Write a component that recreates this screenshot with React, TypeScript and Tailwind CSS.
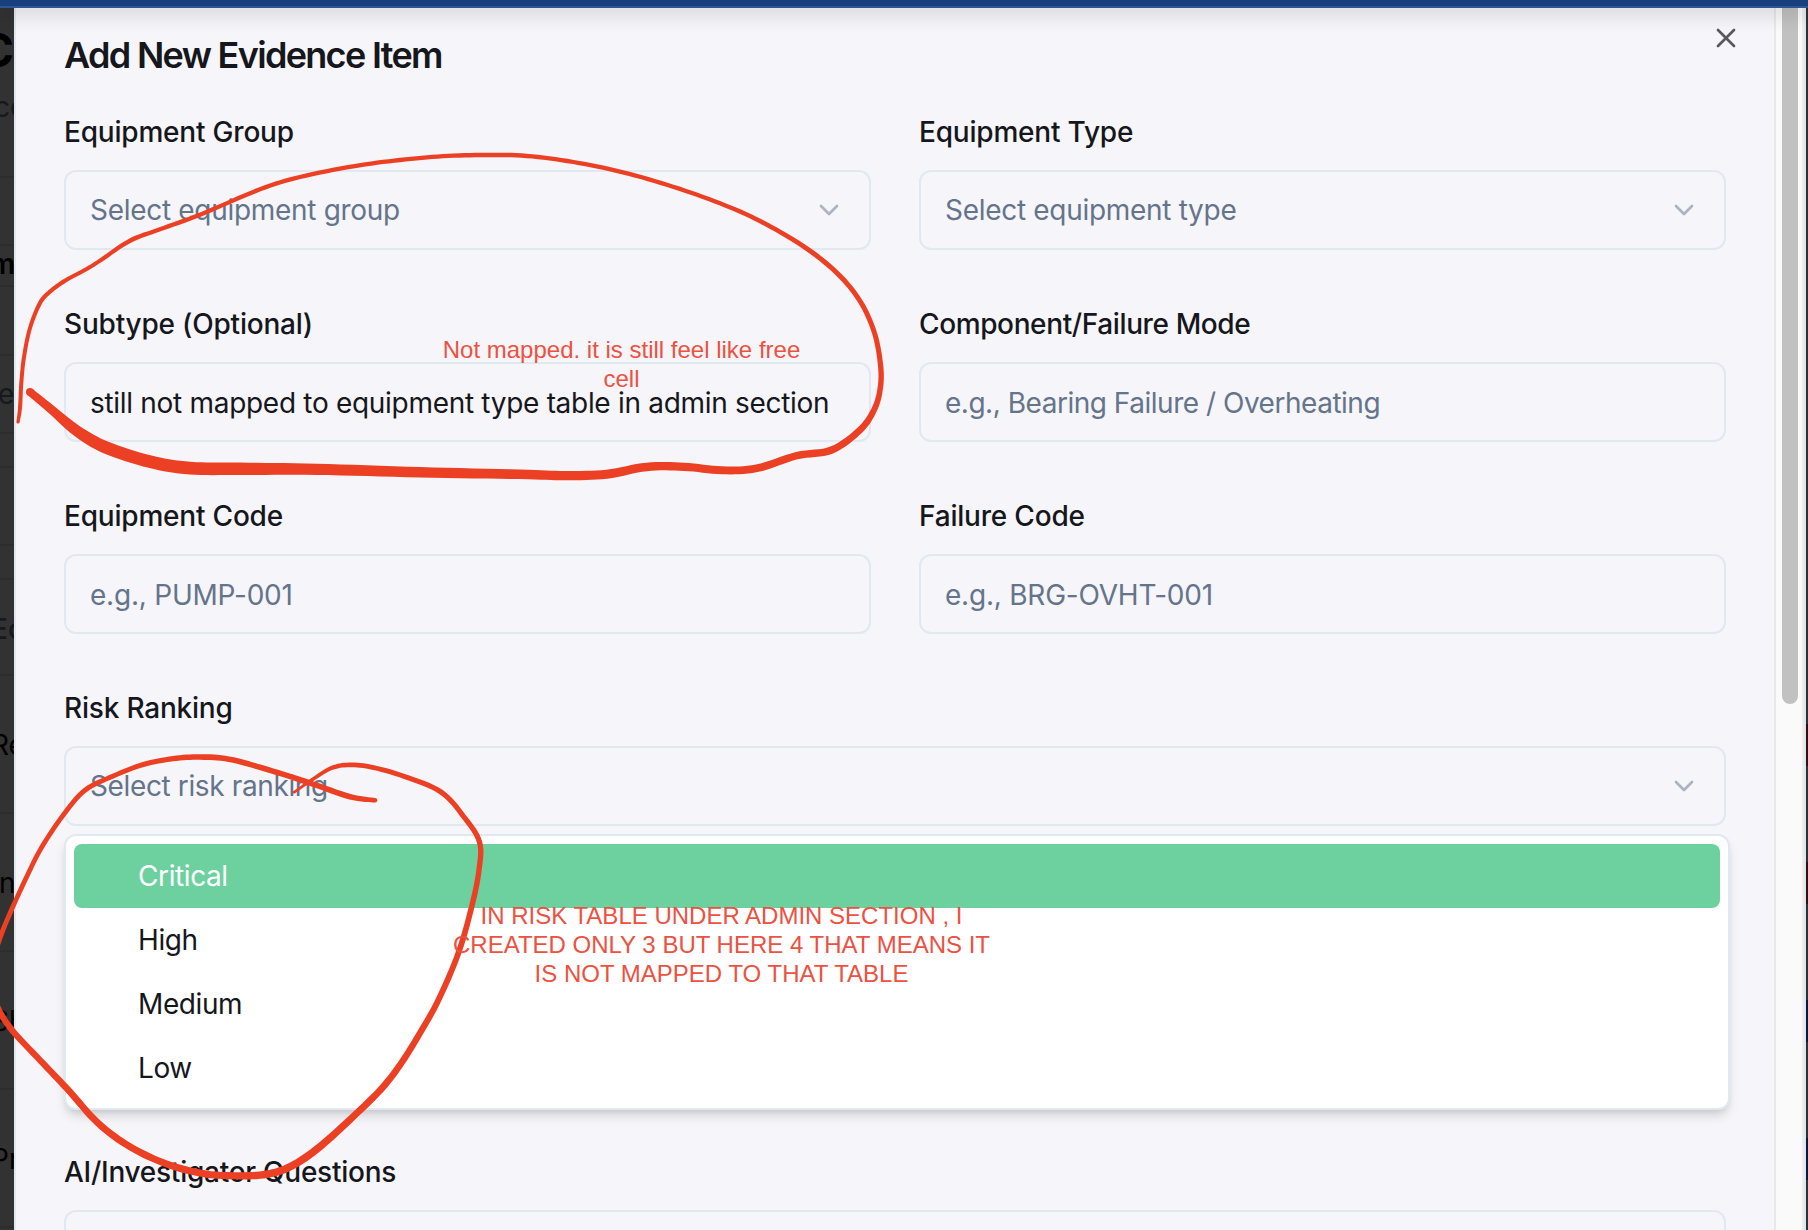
import React from "react";
import { ChevronDown, X } from "lucide-react";

type Pt = [number, number, number];

/* Pen strokes: x, y and pen width at each sample. */
const SUBTYPE_STROKE: Pt[] = [
  [18, 422, 3.2], [20, 408, 4], [21.3, 383, 4], [24, 357, 4], [30, 328, 4], [40, 303, 4.2], [50, 291.7, 4.2],
  [65, 280.7, 4.2], [86.7, 269, 4], [101, 260, 4], [130, 240.7, 4.5], [160, 229.3, 4.3], [200, 214.7, 4.3],
  [260, 189.3, 4.3], [300, 177, 4.3], [353, 166.3, 4.3], [400, 160, 4.3], [443, 156.2, 4.3], [486, 155, 4.5],
  [526.7, 155.9, 4.5], [573.3, 162, 4.3], [623, 172.3, 4.3], [673, 186.7, 4.3], [720, 203.3, 4.3],
  [760, 221, 4.5], [803, 246, 4.8], [836.7, 272.7, 5], [860, 301, 5], [874.5, 333, 5], [880.7, 366.7, 5.3],
  [880, 390, 5.5], [874, 410, 6], [860, 430, 6.7], [831.7, 450, 7.3], [796.7, 455.7, 7.5],
  [756.7, 468.3, 7.7], [722, 470.3, 8], [684, 466.8, 8.2], [646.7, 466.9, 8.5],
  [606.7, 474.2, 9], [565, 475.6, 9.3], [520, 474.3, 9.6], [420, 472.3, 10.4], [316.7, 469.3, 11.2],
  [240, 468.8, 12.4], [190, 468.1, 12.7], [150, 461.7, 12.6], [106, 447.5, 12.5], [76.7, 430.7, 11],
  [50, 408.3, 8.7], [30, 392, 8],
];

const RISK_STROKE: Pt[] = [
  [375, 800.3, 4.6], [350, 796.7, 5.6], [310, 783, 5.6], [266.7, 769.3, 5.6], [229, 759.2, 5.7], [200, 757, 5.7],
  [173, 758.7, 5.3], [143.3, 764.5, 5], [113.3, 776, 4.8], [85, 790.2, 5], [63.3, 815, 4.8], [41.7, 847.3, 4.8],
  [26.7, 876.7, 4.8], [10, 913.3, 4.8], [0, 938, 5], [-8, 965, 5], [-8, 990, 5.5], [0, 1012, 6],
  [13.3, 1031.7, 6.2], [36.7, 1056.7, 6.3], [66.7, 1088.3, 6.6], [98, 1123, 7], [130, 1146.7, 7], [166.7, 1164, 7],
  [203, 1173.6, 7.1], [233, 1175.7, 7.1], [263.3, 1174.7, 7.5], [288, 1167.7, 7.6], [316.7, 1149.3, 7.5],
  [356.7, 1113.3, 7], [383.3, 1086.7, 6.8], [402, 1062, 6.6], [420, 1033, 6.3], [438.4, 1000, 6],
  [458.3, 953.3, 5.8], [471.7, 906.7, 5.6], [479, 870, 5.4], [479.5, 842, 5.3], [464, 817, 5.2],
  [441, 792, 5.2], [404, 776.3, 5], [370, 766.8, 4.8], [346.7, 765, 4.6], [330, 768.7, 4.2],
  [311.7, 780, 3.4], [294, 792.3, 2.6],
];

function resample(points: Pt[]): Pt[] {
  const out: Pt[] = [];
  const at = (i: number) => points[Math.max(0, Math.min(points.length - 1, i))];
  for (let i = 0; i < points.length - 1; i++) {
    const [a, b, c, d] = [at(i - 1), at(i), at(i + 1), at(i + 2)];
    for (let s = 0; s < 8; s++) {
      const t = s / 8;
      out.push(
        [0, 1, 2].map((k) => {
          const m1 = (c[k] - a[k]) / 2;
          const m2 = (d[k] - b[k]) / 2;
          const dist = c[k] - b[k];
          return b[k] + m1 * t + (3 * dist - 2 * m1 - m2) * t * t + (m1 + m2 - 2 * dist) * t * t * t;
        }) as Pt,
      );
    }
  }
  out.push(points[points.length - 1]);
  return out;
}

function outline(points: Pt[]): string {
  const pts = resample(points);
  const left: string[] = [];
  const right: string[] = [];
  pts.forEach(([x, y, w], i) => {
    const p = pts[Math.max(0, i - 1)];
    const n = pts[Math.min(pts.length - 1, i + 1)];
    const dx = n[0] - p[0];
    const dy = n[1] - p[1];
    const len = Math.hypot(dx, dy) || 1;
    const ox = (-dy / len) * (w / 2);
    const oy = (dx / len) * (w / 2);
    left.push(`${(x + ox).toFixed(2)},${(y + oy).toFixed(2)}`);
    right.unshift(`${(x - ox).toFixed(2)},${(y - oy).toFixed(2)}`);
  });
  return `M${left.join("L")}L${right.join("L")}Z`;
}

function PenStroke({ points }: { points: Pt[] }) {
  const ends = [points[0], points[points.length - 1]];
  return (
    <g fill="#ec4025">
      <path d={outline(points)} />
      {ends.map(([x, y, w]) => (
        <circle key={x} cx={x} cy={y} r={w / 2} />
      ))}
    </g>
  );
}

function Field({
  label,
  text,
  select,
  filled,
  labelClass = "tracking-[-0.2px]",
  textClass = "tracking-[-0.3px]",
}: {
  label: string;
  text: string;
  select?: boolean;
  filled?: boolean;
  labelClass?: string;
  textClass?: string;
}) {
  return (
    <div className="flex flex-col gap-6">
      <label className={`text-[28px] leading-7 font-medium ${labelClass}`}>{label}</label>
      <div
        className={`flex h-20 items-center justify-between rounded-xl border-2 border-[#e2e8f0] px-6 ${select ? "" : "pt-0.5"}`}
      >
        <span className={`whitespace-nowrap ${textClass} ${filled ? "text-[#15171c]" : "text-[#64748b]"}`}>{text}</span>
        {select && <ChevronDown className="size-8 text-[#adb4c1]" strokeWidth={2} />}
      </div>
    </div>
  );
}

/* Rows of the dimmed page, visible in the narrow strip left of the dialog. */
const STRIP: { h: string; pt: string; text?: string; style?: string }[] = [
  { h: "h-[170px]", pt: "" },
  { h: "h-[68px]", pt: "" },
  { h: "h-[41px]", pt: "pt-[4px]", text: "m", style: "text-[28px] font-semibold -ml-[10px] text-black" },
  { h: "h-[69px]", pt: "" },
  { h: "h-[78px]", pt: "pt-[24px]", text: "e", style: "text-[28px] -ml-[2px] text-[#15191e]" },
  { h: "h-[34px]", pt: "" },
  { h: "h-[78px]", pt: "" },
  { h: "h-[34px]", pt: "" },
  { h: "h-[96px]", pt: "pt-[35px]", text: "Ec", style: "text-[28px] font-medium -ml-[9px] text-[#15191e]" },
  { h: "h-[138px]", pt: "pt-[55px]", text: "Re", style: "text-[28px] -ml-[9px] text-black" },
  { h: "h-[138px]", pt: "pt-[55px]", text: "n", style: "text-[28px] -ml-[1px] text-black" },
  { h: "h-[138px]", pt: "pt-[55px]", text: "Sh", style: "text-[28px] -ml-[9px] text-black" },
  { h: "h-[138px]", pt: "pt-[55px]", text: "Pr", style: "text-[28px] -ml-[9px] text-black" },
];

const OPTIONS = ["Critical", "High", "Medium", "Low"];

export default function App() {
  return (
    <div className="relative flex h-[1230px] w-[1808px] flex-col overflow-hidden bg-[#333333] font-['Inter',sans-serif] text-[28px] text-[#15171c]">
      <header className="z-10 h-2 shrink-0 border-b-2 border-[#2f5596] bg-[#18407f] shadow-[0_4px_20px_rgba(0,0,0,0.25)]" />

      <div className="flex min-h-0 flex-1">
        <div className="w-3.5 shrink-0 overflow-hidden bg-[#323232]">
          {STRIP.map((row, i) => (
            <div key={i} className={`${row.h} ${row.pt} overflow-hidden border-b-2 border-[#2c2d2e] whitespace-nowrap leading-7`}>
              {i === 0 ? (
                <div className="flex flex-col">
                  <span className="-ml-[20px] pt-[19px] text-[46px] leading-[46px] font-bold text-black">C</span>
                  <span className="-ml-[6px] pt-[20px] leading-7 text-[#15191e]">co</span>
                </div>
              ) : (
                <div className={row.style}>{row.text}</div>
              )}
            </div>
          ))}
        </div>

        <section className="flex min-w-0 flex-1 border-l-2 border-[#e2e8f0] bg-[#f6f5fa]">
          <div className="relative flex min-w-0 flex-1 flex-col pt-[29px] pr-[48px] pl-12">
            <h2 className="text-[36px] leading-9 font-semibold tracking-[-1.68px]">Add New Evidence Item</h2>
            <button className="absolute top-[14px] right-[32px] text-[#58595d]" aria-label="Close">
              <X className="size-8" strokeWidth={2} />
            </button>

            <form className="mt-[45px] flex flex-col gap-[60px]">
              <div className="grid grid-cols-2 gap-x-12 gap-y-[60px]">
                <Field label="Equipment Group" text="Select equipment group" select />
                <Field label="Equipment Type" text="Select equipment type" select />
                <Field
                  label="Subtype (Optional)"
                  text="still not mapped to equipment type table in admin section"
                  filled
                />
                <Field
                  label="Component/Failure Mode"
                  text="e.g., Bearing Failure / Overheating"
                  labelClass="tracking-[-0.38px]"
                  textClass="tracking-[-0.48px]"
                />
                <Field label="Equipment Code" text="e.g., PUMP-001" textClass="tracking-[-0.22px]" />
                <Field label="Failure Code" text="e.g., BRG-OVHT-001" textClass="tracking-[-0.22px]" />
              </div>
              <div className="relative">
                <Field label="Risk Ranking" text="Select risk ranking" textClass="tracking-[-0.37px]" select />
                <ul className="absolute top-[140px] left-0 w-[1666px] rounded-xl border-2 border-[#e2e8f0] bg-white p-2 tracking-[-0.4px] shadow-[0_8px_12px_-2px_rgba(0,0,0,0.12),0_4px_8px_-4px_rgba(0,0,0,0.15)]">
                  {OPTIONS.map((o, i) => (
                    <li
                      key={o}
                      className={
                        i === 0
                          ? "flex h-16 items-center rounded-lg bg-[#6dd19f] pl-16 text-white"
                          : "flex h-16 items-center rounded-lg pl-16"
                      }
                    >
                      {o}
                    </li>
                  ))}
                </ul>
              </div>
              <div className="mt-[272px] flex flex-col gap-6">
                <label className="text-[28px] leading-7 font-medium tracking-[-0.26px]">AI/Investigator Questions</label>
                <div className="h-40 rounded-xl border-2 border-[#e2e8f0]" />
              </div>
            </form>
          </div>

          <div className="flex w-8 shrink-0 border-x-2 border-l-[#e8e8e8] border-r-[#dfe6ed] bg-[#fafafa] pl-1.5">
            <div className="h-[696px] w-4 rounded-b-lg bg-[#c1c1c1]" />
            <div className="ml-auto w-0.5 bg-[#ececec]" />
          </div>
        </section>

        <div className="flex w-0.5 shrink-0 flex-col bg-[#2e3033] pt-[716px]">
          <div className="h-[42px] shrink-0 bg-[#330d12]" />
          <div className="mt-24 h-[42px] shrink-0 bg-[#330d12]" />
          <div className="mt-24 h-[42px] shrink-0 bg-[#0d1738]" />
          <div className="mt-24 h-[42px] shrink-0 bg-[#0d1738]" />
        </div>
      </div>

      <svg className="pointer-events-none absolute inset-0 z-20" width="1808" height="1230" viewBox="0 0 1808 1230">
        <PenStroke points={SUBTYPE_STROKE} />
        <PenStroke points={RISK_STROKE} />
      </svg>
      <p className="absolute top-[335px] left-[421.5px] z-20 w-[400px] text-center font-['Liberation_Sans',Arial,sans-serif] text-[24px] leading-[29px] text-[#ed5141]">
        Not mapped. it is still feel like free
        <br />
        cell
      </p>
      <p className="absolute top-[901px] left-[421.5px] z-20 w-[600px] text-center font-['Liberation_Sans',Arial,sans-serif] text-[24px] leading-[29px] text-[#ed5141]">
        IN RISK TABLE UNDER ADMIN SECTION , I
        <br />
        CREATED ONLY 3 BUT HERE 4 THAT MEANS IT
        <br />
        IS NOT MAPPED TO THAT TABLE
      </p>
    </div>
  );
}
